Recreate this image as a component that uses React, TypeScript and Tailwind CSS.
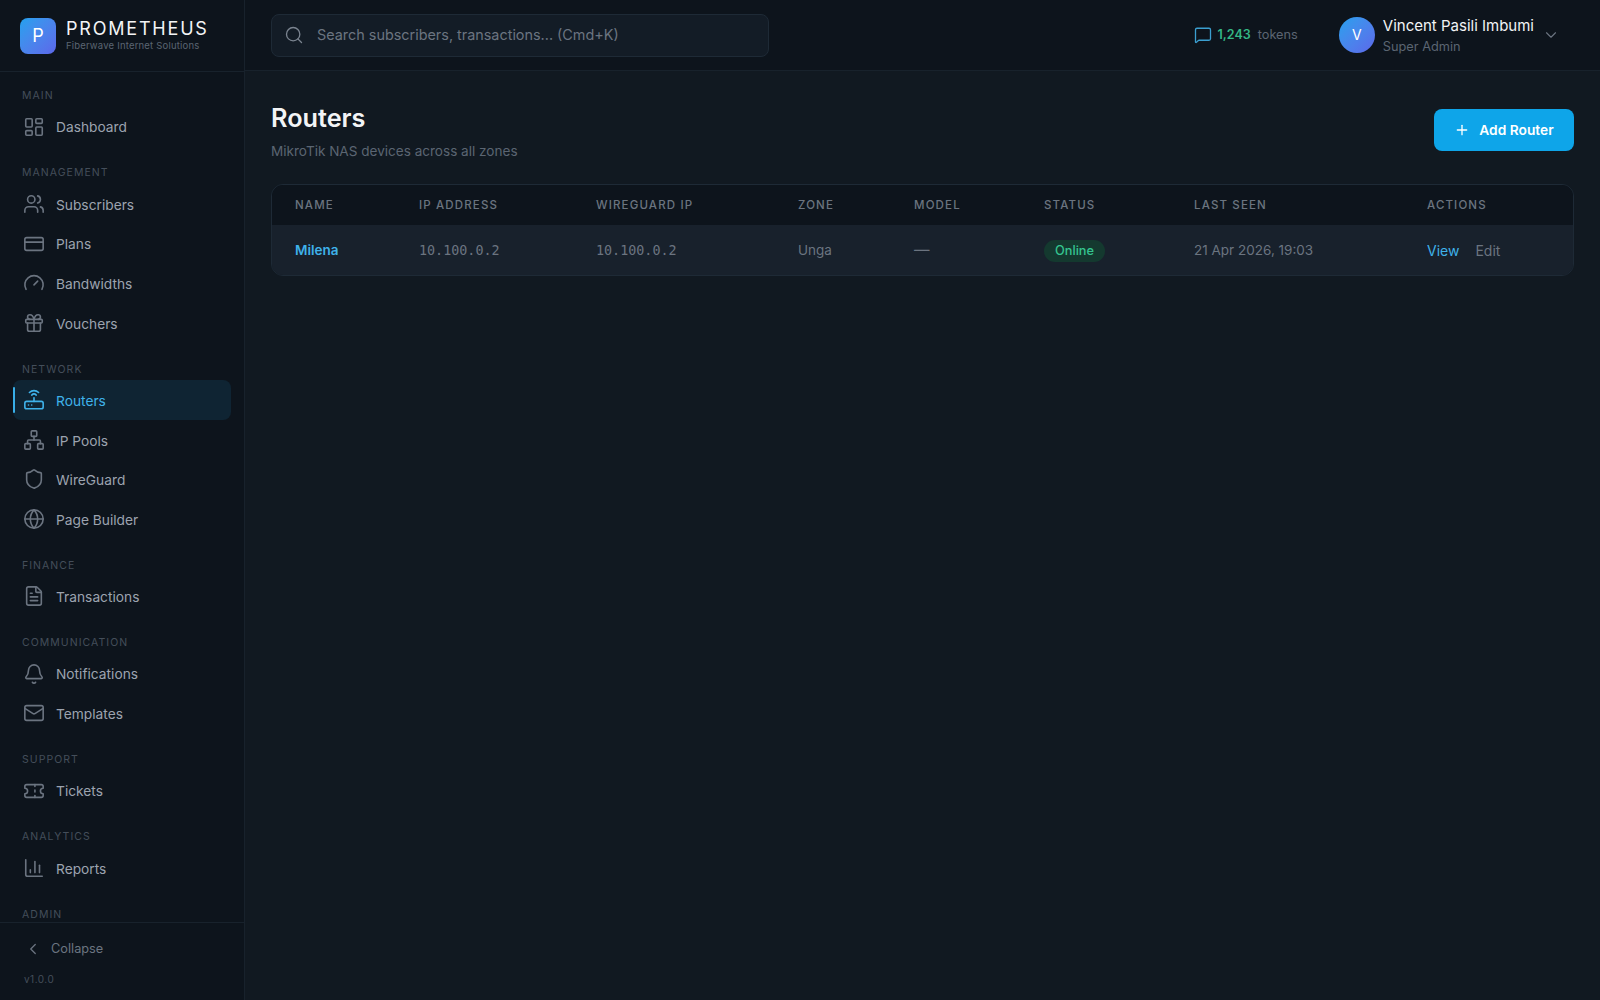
import {
  LayoutDashboard, Users, CreditCard, Gauge, Gift, Network, Shield, Globe, FileText,
  Bell, Mail, Ticket, ChartColumn, ChevronLeft, ChevronDown, Search, MessageSquare, Plus,
} from 'lucide-react';

const RouterIcon = ({ className }: { className?: string }) => (
  <svg viewBox="0 0 24 24" fill="none" stroke="currentColor" strokeWidth="1.75" strokeLinecap="round" strokeLinejoin="round" className={className}>
    <rect x="2" y="13.5" width="20" height="8" rx="2" />
    <path d="M12 13.5V9.5" />
    <path d="M9.5 6.6a3.6 3.6 0 0 1 5 0" />
    <path d="M7 3.8a7.2 7.2 0 0 1 10 0" />
    <path d="M6 17.5h.01M9.5 17.5h.01" />
  </svg>
);

const navGroups = [
  { label: 'MAIN', items: [{ name: 'Dashboard', icon: LayoutDashboard }] },
  {
    label: 'MANAGEMENT',
    items: [
      { name: 'Subscribers', icon: Users },
      { name: 'Plans', icon: CreditCard },
      { name: 'Bandwidths', icon: Gauge },
      { name: 'Vouchers', icon: Gift },
    ],
  },
  {
    label: 'NETWORK',
    items: [
      { name: 'Routers', icon: RouterIcon, active: true },
      { name: 'IP Pools', icon: Network },
      { name: 'WireGuard', icon: Shield },
      { name: 'Page Builder', icon: Globe },
    ],
  },
  { label: 'FINANCE', items: [{ name: 'Transactions', icon: FileText }] },
  {
    label: 'COMMUNICATION',
    items: [
      { name: 'Notifications', icon: Bell },
      { name: 'Templates', icon: Mail },
    ],
  },
  { label: 'SUPPORT', items: [{ name: 'Tickets', icon: Ticket }] },
  { label: 'ANALYTICS', items: [{ name: 'Reports', icon: ChartColumn }] },
  { label: 'ADMIN', items: [] },
];

const columns = ['NAME', 'IP ADDRESS', 'WIREGUARD IP', 'ZONE', 'MODEL', 'STATUS', 'LAST SEEN', 'ACTIONS'];

export default function App() {
  return (
    <div className="flex h-screen overflow-hidden bg-[#111921] font-['Inter',sans-serif] text-[#9ca3af]">
      {/* ── Sidebar ── */}
      <aside className="flex w-[245px] shrink-0 flex-col border-r border-[#18222c] bg-[#0d141c]">
        <div className="flex h-[72px] shrink-0 items-center gap-[10px] border-b border-[#18222c] pl-5">
          <div className="flex h-9 w-9 items-center justify-center rounded-lg bg-gradient-to-br from-[#1ea1ee] to-[#5b67ea] text-lg text-white">P</div>
          <div className="-mt-[2px]">
            <p className="text-[18px] leading-[22px] tracking-[0.1em] text-[#f3f4f6]">PROMETHEUS</p>
            <p className="text-[9.5px] leading-3 tracking-[0.02em] text-[#5b6572]">Fiberwave Internet Solutions</p>
          </div>
        </div>

        <nav className="min-h-0 flex-1 overflow-hidden pt-4">
          {navGroups.map((group) => (
            <div key={group.label} className="mb-[18.75px]">
              <p className="flex h-4 items-center pl-[22px] text-[10.5px] tracking-[0.1em] text-[#444e5a]">{group.label}</p>
              <div className="mt-[3px]">
                {group.items.map((item: any) => (
                  <div
                    key={item.name}
                    className={`relative mx-[13px] flex h-[39.6px] w-[218px] items-center gap-[11px] rounded-lg pl-[10px] text-[13.75px] ${
                      item.active ? 'bg-[#0f2433] text-[#3fb2ea]' : 'text-[#9ca3af]'
                    }`}
                  >
                    {item.active && <span className="absolute left-0 top-[7px] h-[26px] w-0.5 rounded-full bg-[#38aee8]" />}
                    <item.icon className={`h-[22px] w-[22px] shrink-0 ${item.active ? 'text-[#3fb2ea]' : 'text-[#6b7480]'}`} strokeWidth={1.75} />
                    <span className="pt-[2px]">{item.name}</span>
                  </div>
                ))}
              </div>
            </div>
          ))}
        </nav>

        <div className="h-[78px] shrink-0 border-t border-[#18222c] pl-6">
          <div className="flex h-[52px] items-center gap-[9px] text-[12.75px] text-[#6b7480]">
            <ChevronLeft className="h-[18px] w-[18px]" strokeWidth={1.75} />
            Collapse
          </div>
          <p className="-mt-[2px] text-[10px] leading-3 tracking-[0.05em] text-[#444e5a]">v1.0.0</p>
        </div>
      </aside>

      <div className="flex min-w-0 flex-1 flex-col">
        {/* ── Topbar ── */}
        <header className="flex h-[71px] shrink-0 items-center border-b border-[#18222c] bg-[#0d141c] pl-[26px] pr-10">
          <div className="flex h-[43px] w-[498px] items-center gap-[13px] rounded-lg border border-[#1e2a36] bg-[#131c26] pl-3">
            <Search className="h-5 w-5 text-[#7b8490]" strokeWidth={1.6} />
            <span className="text-[14.4px] text-[#6b7480]">Search subscribers, transactions... (Cmd+K)</span>
          </div>
          <div className="ml-auto flex items-center">
            <MessageSquare className="h-[18px] w-[18px] text-[#3b9fd0]" strokeWidth={1.75} />
            <span className="ml-[6px] text-[12.5px] font-semibold text-[#34b886]">1,243</span>
            <span className="ml-[7px] text-[12.75px] text-[#5b6572]">tokens</span>
            <div className="ml-[41px] flex h-9 w-9 items-center justify-center rounded-full bg-gradient-to-br from-[#1ea1ee] to-[#5b67ea] text-sm text-white">V</div>
            <div className="ml-[8px]">
              <p className="pt-[2px] text-[15px] leading-5 text-[#f3f4f6]">Vincent Pasili Imbumi</p>
              <p className="text-[12.75px] leading-[21px] text-[#5b6572]">Super Admin</p>
            </div>
            <ChevronDown className="ml-2 h-[18px] w-[18px] text-[#6b7480]" strokeWidth={1.5} />
          </div>
        </header>

        {/* ── Content ── */}
        <main className="flex-1 pl-[26px] pr-[26px] pt-[29px]">
          <div className="flex items-start justify-between">
            <div>
              <h1 className="text-[25.25px] font-semibold leading-[36px] text-[#f3f4f6]">Routers</h1>
              <p className="mt-[5px] text-[13.55px] leading-5 text-[#5b6572]">MikroTik NAS devices across all zones</p>
            </div>
            <button className="mt-[9px] flex h-[42px] w-[140px] items-center justify-center gap-[9px] rounded-lg bg-[#0ea5e9] text-[13.75px] font-semibold text-white">
              <Plus className="h-4 w-4" strokeWidth={2} />
              Add Router
            </button>
          </div>

          <div className="mt-[23px] overflow-hidden rounded-xl border border-[#1e2a36]">
            <table className="w-full table-fixed border-collapse text-left">
              <colgroup>
                <col className="w-[124px]" />
                <col className="w-[177px]" />
                <col className="w-[202px]" />
                <col className="w-[116px]" />
                <col className="w-[130px]" />
                <col className="w-[150px]" />
                <col className="w-[233px]" />
                <col />
              </colgroup>
              <thead>
                <tr className="h-[40px] bg-[#0d141c]">
                  {columns.map((c) => (
                    <th key={c} className="pl-[23px] pt-[2px] text-[11.5px] font-medium tracking-[0.1em] text-[#6b7480]">{c}</th>
                  ))}
                </tr>
              </thead>
              <tbody>
                <tr className="h-[50px] bg-[#18212c] text-[13.5px] text-[#6b7480]">
                  <td className="pl-[23px] font-semibold text-[#3fb2ea]">Milena</td>
                  <td className="pl-[23px] pt-[2px] font-['DejaVu_Sans_Mono',monospace] text-[13.4px]">10.100.0.2</td>
                  <td className="pl-[23px] pt-[2px] font-['DejaVu_Sans_Mono',monospace] text-[13.4px]">10.100.0.2</td>
                  <td className="pl-[23px]">Unga</td>
                  <td className="pl-[23px] text-[15.5px]">—</td>
                  <td className="pl-[23px] pt-[2px]">
                    <span className="inline-flex h-[22px] items-center rounded-full bg-[#14392f] px-[11px] text-[12.75px] font-medium text-[#34c58f]">Online</span>
                  </td>
                  <td className="pl-[23px]">21 Apr 2026, 19:03</td>
                  <td className="pl-[23px] text-[14px]">
                    <span className="text-[#3fb2ea]">View</span>
                    <span className="ml-4">Edit</span>
                  </td>
                </tr>
              </tbody>
            </table>
          </div>
        </main>
      </div>
    </div>
  );
}
